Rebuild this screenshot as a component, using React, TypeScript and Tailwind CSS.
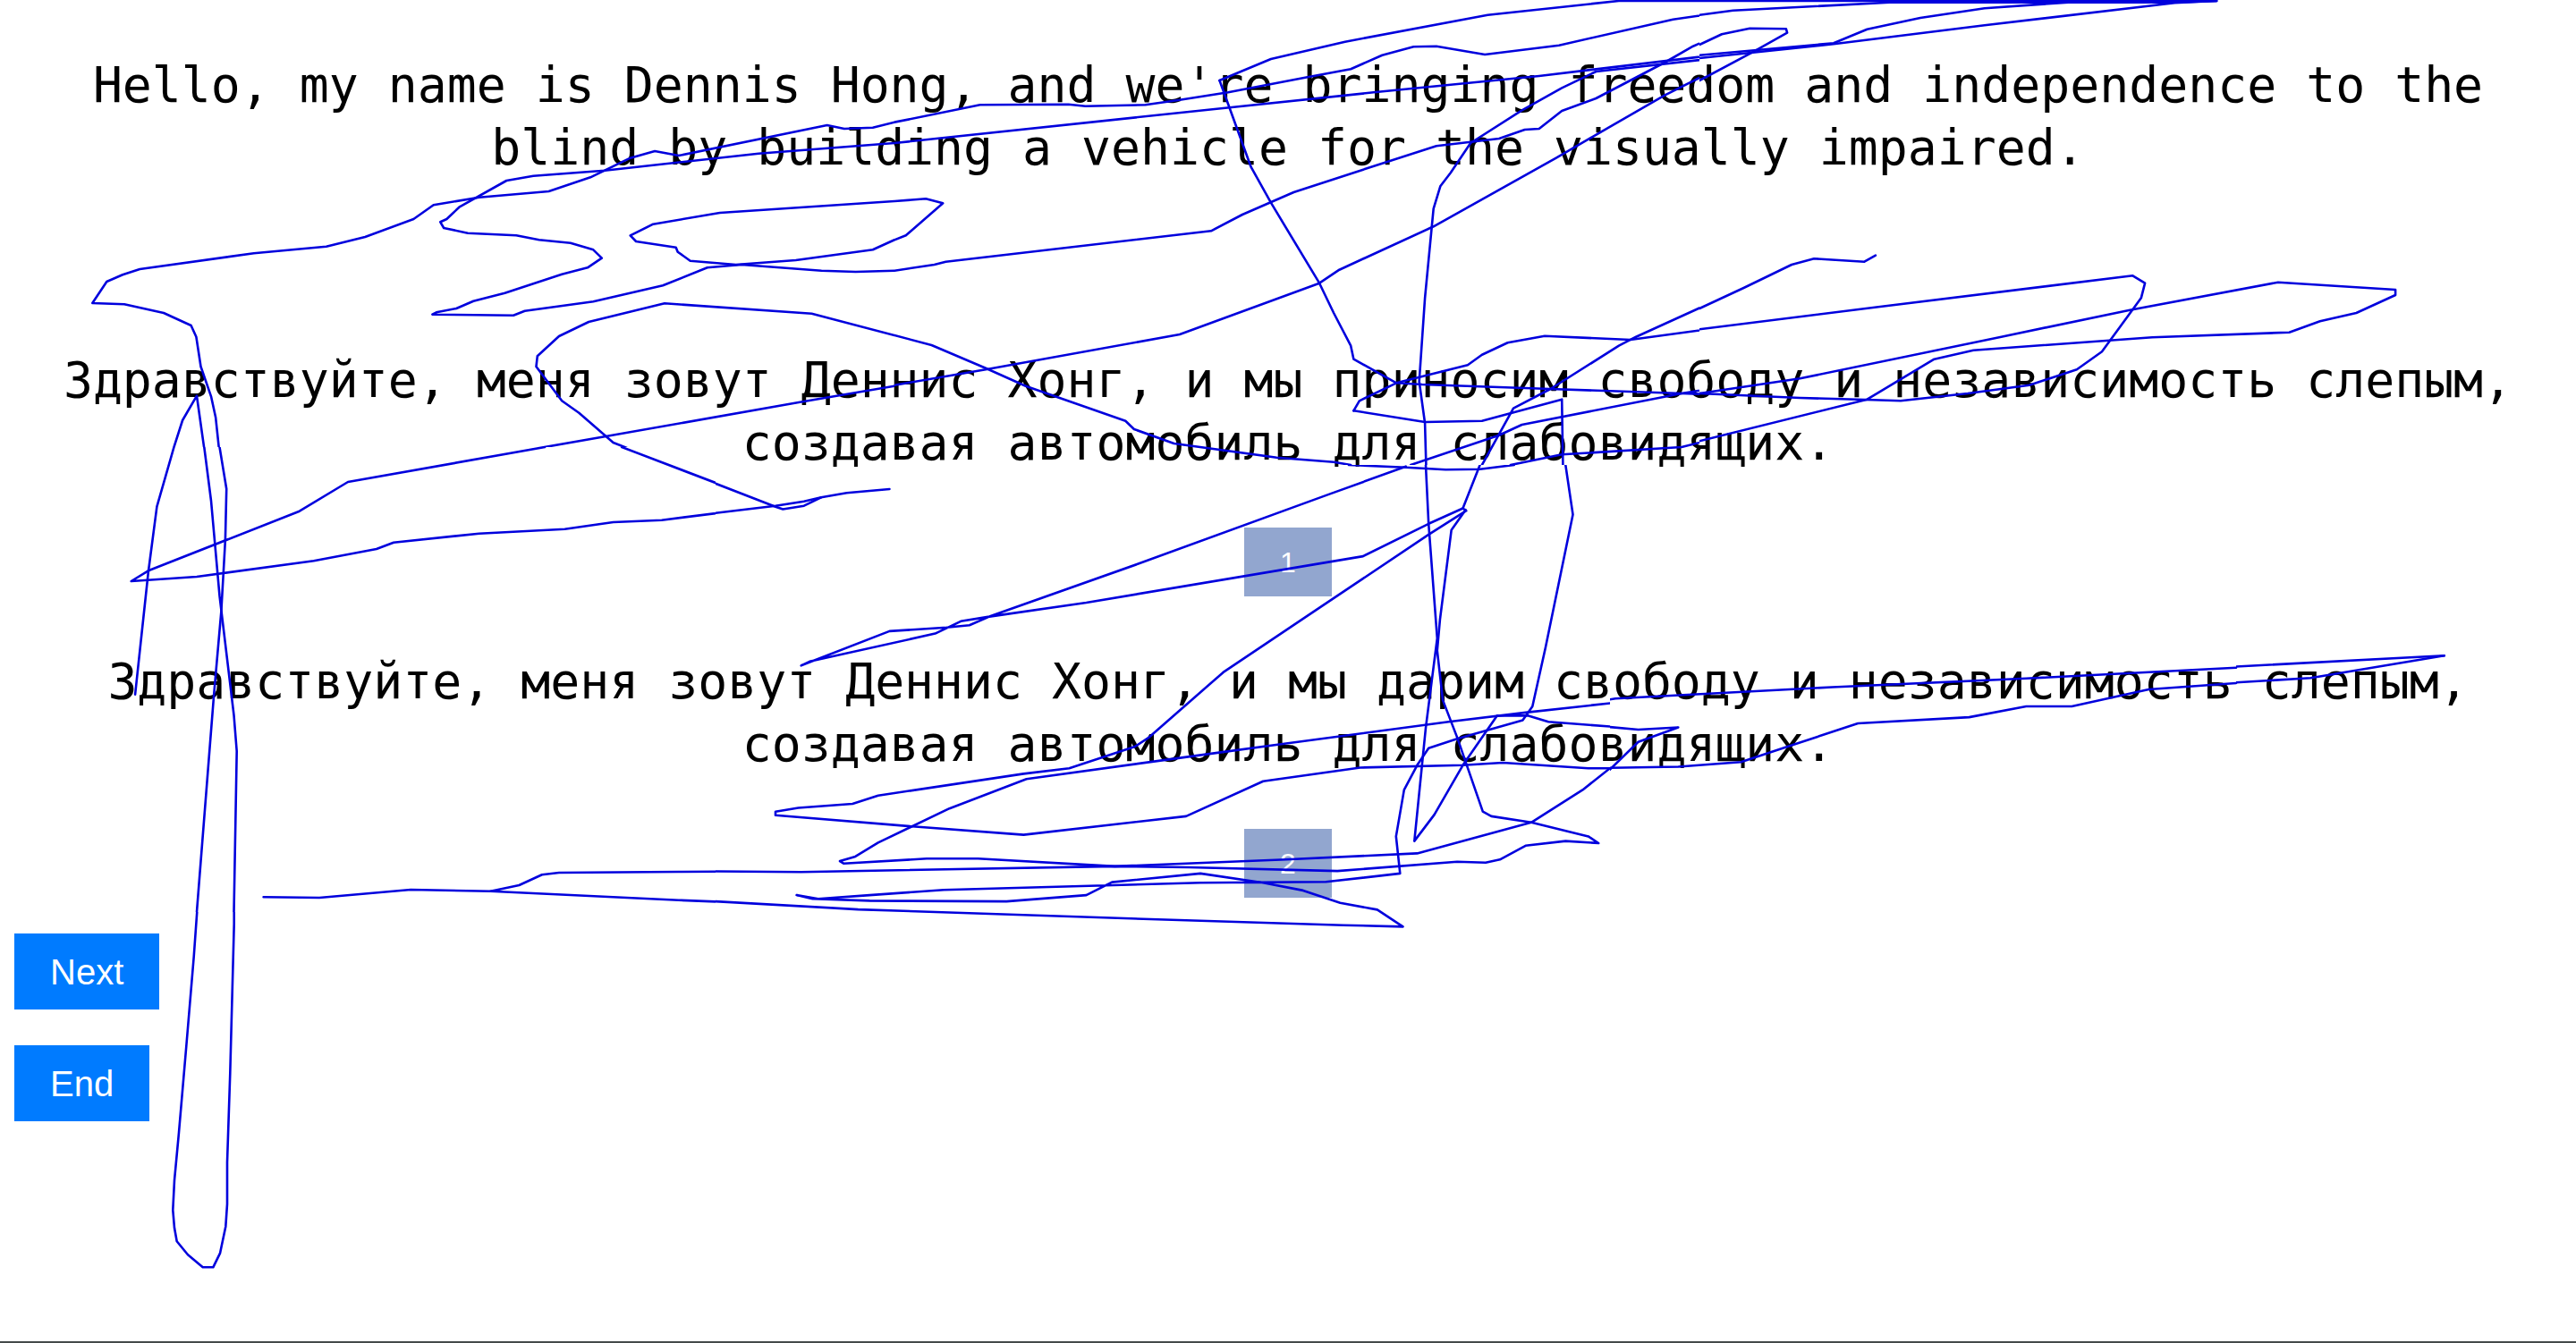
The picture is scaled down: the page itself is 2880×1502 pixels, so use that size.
type P = number[];
type Crop = { x0: number; y0: number; sx: number; sy: number; clip: [number, number, number, number]; lines: P[] };

const crops: Crop[] = [
  { x0: 0, y0: 0, sx: 1.568, sy: 3, clip: [0, 0, 1000, 500], lines: [
    [1568,410,1530,428,1480,432,1450,420,1190,522,1148,507,1105,530,1035,595,962,642,840,662,760,688,725,735,640,795,572,827,445,850,245,903,215,922,187,945,162,1017,218,1021,287,1050,335,1092,344,1130,352,1230,370,1330,378,1400,387,1560],
    [295,1560,320,1410,345,1328,362,1560],
    [1568,480,1330,515,1060,572,935,590,888,606,805,695,783,735,772,745,778,765,820,782,905,790,945,805,1000,815,1040,838,1055,866,1030,898,985,920,885,983,830,1010,800,1035,765,1048,758,1055,900,1058,920,1043,1040,1012,1162,958,1240,898,1300,888,1440,908,1500,912,1568,908],
    [1568,675,1262,714,1145,752,1105,790,1115,810,1185,830,1188,845,1210,875,1290,888,1395,873,1530,838,1568,805],
    [1568,1125,1423,1052,1165,1018,1032,1080,980,1128,942,1195,940,1230,985,1345,1015,1385,1075,1485,1175,1560],
    [775,1560,1060,1465,1400,1350,1568,1295],
  ]},
  { x0: 1000, y0: 0, sx: 1.568, sy: 3, clip: [1000, 0, 900, 520], lines: [
    [0,410,150,352,305,350,335,356,440,352,500,335,585,310,720,260,800,232,855,185,910,157,950,155,1035,183,1165,152,1365,65,1475,35,1568,28],
    [570,270,595,250,660,198,790,140,1040,50,1270,3,1568,3],
    [570,270,625,560,660,680,745,950,770,1050,800,1160,805,1205,880,1285,925,1290,1150,1305,1380,1320,1568,1332],
    [0,480,580,362,840,310,1130,255,1568,155],
    [1568,168,1230,240,1170,295,1100,370,1010,480,975,580,957,625,945,700,930,1000,920,1280,930,1420,932,1560],
    [1500,175,1350,320,1250,430,1160,530,945,760,780,905,745,950,500,1122,160,1240,0,1292],
    [1500,95,1450,115,1400,155,1350,210,1230,330,1170,372,1130,432,1105,435,1060,465,950,490,860,545,700,645,610,720,555,775,90,878,70,888,0,908],
    [0,1125,65,1158,160,1235,230,1295,405,1412,420,1440,490,1488,670,1535,770,1550,800,1560],
    [0,805,20,790,85,682,55,667,0,675],
    [805,1378,815,1345,880,1285,1005,1225,1030,1190,1075,1150,1140,1127,1290,1140,1568,1068],
    [805,1378,930,1416,1030,1412,1170,1340,1172,1560],
    [1568,895,1490,965,1300,1130,1270,1160,1150,1305,1085,1370,1030,1560],
    [905,1560,1060,1460,1100,1425,1380,1320,1568,1262],
    [1080,1560,1170,1525,1380,1500,1568,1410],
  ]},
  { x0: 1900, y0: 0, sx: 1.6, sy: 3, clip: [1900, 0, 980, 520], lines: [
    [0,50,60,35,340,8,660,8,850,8,925,3],
    [0,3,925,3],
    [0,185,240,145,300,98,395,60,510,28,660,8],
    [0,195,240,148,510,85,850,10,925,3],
    [0,150,40,115,90,95,155,97,157,110,95,175,0,270],
    [0,1035,80,965,165,888,205,868,295,878,315,857],
    [0,1105,320,1030,775,925,797,950,790,1000,720,1180,675,1240,590,1292,480,1320,360,1345,310,1342,180,1335,0,1320],
    [0,1320,180,1270,540,1130,770,1040,1035,947,1245,972,1245,990,1175,1050,1110,1078,1055,1115,810,1132,490,1175,420,1205,300,1340,0,1480],
  ]},
  { x0: 0, y0: 500, sx: 1.568, sy: 3, clip: [0, 500, 800, 520], lines: [
    [305,0,275,200,260,420,237,830],
    [358,0,370,180,385,500,410,900,415,1020,410,1560],
    [385,0,397,140,395,310,388,550,375,830,345,1560],
    [955,0,610,117,525,215,260,415,230,450,345,435,550,382,660,342,690,320,840,290,990,275,1075,252,1160,245,1360,197,1420,178,1470,155,1560,143],
    [1090,0,1360,197,1372,208,1410,197,1435,170],
    [462,1510,560,1512,720,1485,860,1490,910,1470,950,1435,980,1428,1190,1425,1400,1422,1568,1420],
    [860,1490,1190,1520,1568,1550],
  ]},
  { x0: 800, y0: 520, sx: 1.568, sy: 2.889, clip: [800, 520, 1000, 540], lines: [
    [0,60,105,135,118,143,155,132,185,105,230,90,305,78],
    [0,155,105,132,155,118,185,105],
    [1110,0,1210,8,1280,15,1340,14,1400,0],
    [1210,5,1075,95,740,320,480,490,445,518,405,525,305,537,150,648,165,635,385,545,430,505,480,490,650,445,1135,295,1250,190,1310,140,1316,148,1250,225,1060,460,890,670,760,880,735,910,620,980,540,998,285,1068,240,1095,145,1108,105,1120,105,1132,345,1168,540,1195,825,1135,960,1022,1130,978,1310,970,1380,962,1530,980,1568,980],
    [1568,770,1420,800,1285,830,1000,900,880,930,780,955,545,1015,410,1110,285,1220,245,1265,218,1280,225,1288,370,1272,460,1272,700,1297,1000,1275,1230,1255,1430,1155,1520,1050,1568,980],
    [1310,140,1340,0],
    [1245,0,1250,190,1265,560,1245,850,1225,1215,1260,1130,1310,970,1370,810,1425,810,1460,830,1568,845],
    [1315,145,1290,210,1270,500,1265,600,1275,760,1300,880,1345,1120,1360,1135,1430,1155,1530,1200,1548,1222,1490,1215,1420,1230,1375,1275,1350,1285,1300,1282,1090,1312,830,1300,700,1297,150,1315,0,1313],
    [1490,0,1503,160,1455,590,1432,780,1415,825,1300,885,1250,915,1230,970,1207,1050,1193,1200,1200,1320,1070,1347,850,1350,400,1373,270,1390,180,1402,142,1390,170,1402,270,1408,510,1410,650,1390,695,1348,850,1320,960,1350,1030,1375,1095,1415,1160,1437,1205,1492,1100,1487,800,1470,250,1436,0,1410],
  ]},
  { x0: 1500, y0: 520, sx: 1.568, sy: 2.889, clip: [1800, 520, 1000, 540], lines: [
    [0,870,325,800,480,755,860,718,1200,690,1568,655],
    [325,800,330,815,355,828,520,855,590,848,520,895,470,985,425,1050,330,1155],
    [1568,705,1415,725,1280,780,1200,780,1100,815,905,835,790,905,700,960,590,975,420,980,330,965,215,965],
  ]},
  { x0: 2300, y0: 690, sx: 3, sy: 3, clip: [2500, 690, 380, 200], lines: [
    [0,198,1298,130],
    [0,298,50,295,250,250,420,230,850,205,1298,130],
  ]},
  { x0: 0, y0: 1000, sx: 3, sy: 3, clip: [0, 1020, 800, 482], lines: [
    [665,0,650,210,625,510,600,800,585,960,580,1060,585,1120,593,1165,630,1210,680,1252,715,1252,738,1205,757,1115,762,1040,762,900,772,600,785,100,785,0],
  ]},
];

const toPoints = (c: Crop, l: P) => {
  const out: string[] = [];
  for (let i = 0; i < l.length; i += 2) out.push(`${(c.x0 + l[i] / c.sx).toFixed(1)},${(c.y0 + l[i + 1] / c.sy).toFixed(1)}`);
  return out.join(" ");
};

const Para = ({ children }: { children: string }) => (
  <p className="text-center text-[54.8px] leading-[70px] text-black px-4 font-['DejaVu_Sans_Mono',monospace]">{children}</p>
);

const Badge = ({ n }: { n: string }) => (
  <div className="mx-auto w-[98px] h-[77px] bg-[#92a6cf] flex items-center justify-center text-white text-[32px] font-['Liberation_Sans',Arial,sans-serif]">
    {n}
  </div>
);

const Btn = ({ children }: { children: string }) => (
  <button className="self-start ml-4 px-10 h-[85px] bg-[#007bff] text-white text-[40px] font-['Liberation_Sans',Arial,sans-serif]">
    {children}
  </button>
);

export default function App() {
  return (
    <div className="relative w-[2880px] h-[1502px] bg-white overflow-hidden flex flex-col border-b-2 border-[#444a4a]">
      <div className="mt-[60px]">
        <Para>Hello, my name is Dennis Hong, and we're bringing freedom and independence to the blind by building a vehicle for the visually impaired.</Para>
      </div>
      <div className="mt-[190px] flex flex-col gap-[60px]">
        <Para>Здравствуйте, меня зовут Деннис Хонг, и мы приносим свободу и независимость слепым, создавая автомобиль для слабовидящих.</Para>
        <Badge n="1" />
        <Para>Здравствуйте, меня зовут Деннис Хонг, и мы дарим свободу и независимость слепым, создавая автомобиль для слабовидящих.</Para>
        <Badge n="2" />
      </div>
      <div className="mt-10 flex flex-col gap-10">
        <Btn>Next</Btn>
        <Btn>End</Btn>
      </div>
      <svg className="absolute left-0 top-0 pointer-events-none" width="2880" height="1502" viewBox="0 0 2880 1502" fill="none">
        <defs>
          {crops.map((c, i) => (
            <clipPath key={i} id={`c${i}`}>
              <rect x={c.clip[0]} y={c.clip[1]} width={c.clip[2]} height={c.clip[3]} />
            </clipPath>
          ))}
        </defs>
        {crops.map((c, i) => (
          <g key={i} clipPath={`url(#c${i})`}>
            {c.lines.map((l, j) => (
              <polyline key={j} points={toPoints(c, l)} stroke="#0000dd" strokeWidth="2.6" strokeLinejoin="round" strokeLinecap="round" />
            ))}
          </g>
        ))}
      </svg>
    </div>
  );
}
